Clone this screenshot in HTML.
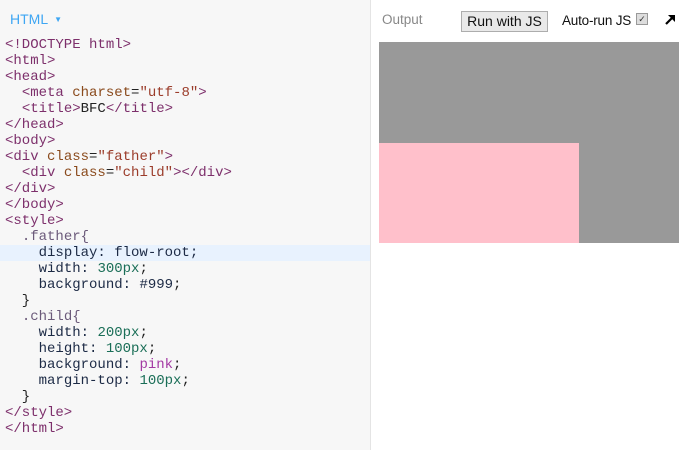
<!DOCTYPE html>
<html><head><meta charset="utf-8"><style>
body{margin:0;width:686px;height:450px;overflow:hidden;background:#fff;font-family:"Liberation Sans",sans-serif;position:relative}
#left{position:absolute;left:0;top:0;width:370px;height:450px;background:#f7f7f7;border-right:1px solid #e4e4e4}
#hdr{position:absolute;left:10px;top:11px;color:#3ea6f3;font-size:14px}
#hdr span{font-size:8px;margin-left:6px;vertical-align:2px}
#code{position:absolute;left:5px;top:37px;font-family:"Liberation Mono",monospace;font-size:14px;line-height:16px;white-space:pre;color:#222}
.hl{position:absolute;left:0;top:245px;width:370px;height:16px;background:#e8f2fe}
.t{color:#7d2f6b}.a{color:#8a4a1c}.s{color:#9b3c2a}.n{color:#1a6e57}.k{color:#a33aa3}.sel{color:#6b5a7a}.p{color:#1c2a45}
#out{position:absolute;left:382px;top:12px;color:#888;font-size:13.5px}
#run{position:absolute;left:461px;top:11px;width:87px;height:21px;box-sizing:border-box;border:1px solid #adadad;background:#e9e9e9;font-size:14px;text-align:center;line-height:19px;color:#111}
#auto{position:absolute;left:562px;top:13px;font-size:13.5px;color:#111;letter-spacing:-0.2px}
#cb{position:absolute;left:636px;top:13px;width:10px;height:10px;border:1px solid #999;background:#ddd;font-size:9px;line-height:10px;text-align:center;color:#333}
</style></head><body>
<div id="left"><div class="hl"></div>
<div id="hdr">HTML<span>▼</span></div>
<div id="code"><span class="t">&lt;!DOCTYPE html&gt;</span>
<span class="t">&lt;html&gt;</span>
<span class="t">&lt;head&gt;</span>
  <span class="t">&lt;meta</span> <span class="a">charset</span>=<span class="s">"utf-8"</span><span class="t">&gt;</span>
  <span class="t">&lt;title&gt;</span>BFC<span class="t">&lt;/title&gt;</span>
<span class="t">&lt;/head&gt;</span>
<span class="t">&lt;body&gt;</span>
<span class="t">&lt;div</span> <span class="a">class</span>=<span class="s">"father"</span><span class="t">&gt;</span>
  <span class="t">&lt;div</span> <span class="a">class</span>=<span class="s">"child"</span><span class="t">&gt;&lt;/div&gt;</span>
<span class="t">&lt;/div&gt;</span>
<span class="t">&lt;/body&gt;</span>
<span class="t">&lt;style&gt;</span>
  <span class="sel">.father{</span>
    <span class="p">display: flow-root;</span>
    <span class="p">width:</span> <span class="n">300px</span>;
    <span class="p">background:</span> <span class="p">#999</span>;
  }
  <span class="sel">.child{</span>
    <span class="p">width:</span> <span class="n">200px</span>;
    <span class="p">height:</span> <span class="n">100px</span>;
    <span class="p">background:</span> <span class="k">pink</span>;
    <span class="p">margin-top:</span> <span class="n">100px</span>;
  }
<span class="t">&lt;/style&gt;</span>
<span class="t">&lt;/html&gt;</span></div>
</div>
<div id="out">Output</div>
<div id="run">Run with JS</div>
<div id="auto">Auto-run JS</div>
<div id="cb">✓</div>
<svg style="position:absolute;left:664px;top:13px" width="13" height="13" viewBox="0 0 13 13"><path d="M2 11 L10 3" stroke="#000" stroke-width="2.2"/><path d="M4 2 H11 V9 Z" fill="#000"/></svg>
<div style="position:absolute;left:379px;top:42px;width:300px;height:201px;background:#999"></div>
<div style="position:absolute;left:379px;top:143px;width:200px;height:100px;background:pink"></div>
</body></html>
